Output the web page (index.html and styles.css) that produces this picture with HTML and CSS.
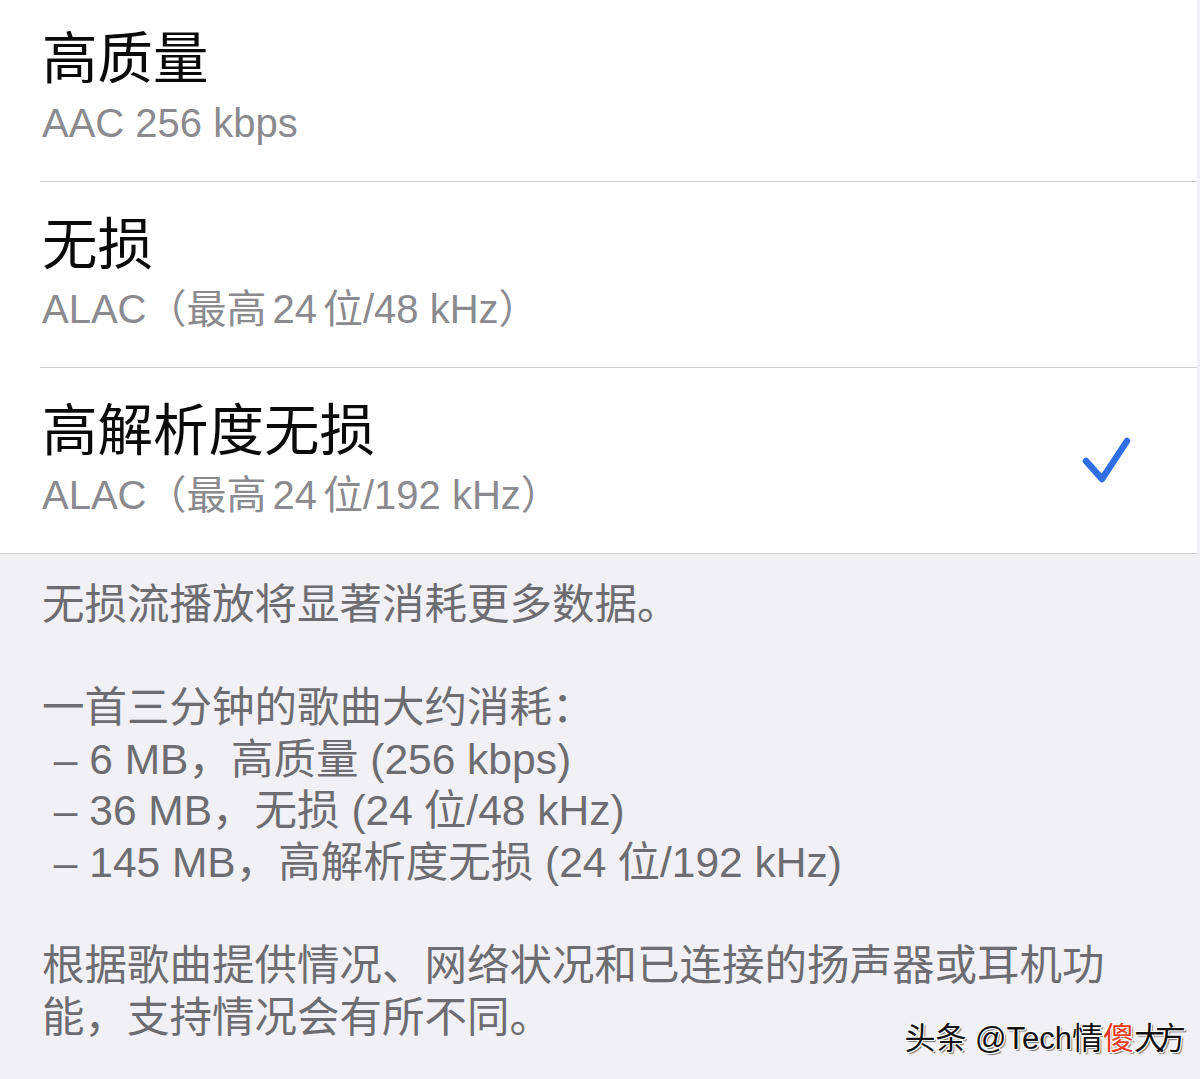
FILE: index.html
```html
<!DOCTYPE html>
<html lang="zh-CN">
<head>
<meta charset="utf-8">
<title>音质</title>
<link rel="stylesheet" href="styles.css">
</head>
<body>
<div class="screen">
  <ul class="options">
    <li class="option">
      <div class="option-text">
        <div class="option-title">高质量</div>
        <div class="option-sub">AAC 256 kbps</div>
      </div>
    </li>
    <li class="option">
      <div class="option-text">
        <div class="option-title">无损</div>
        <div class="option-sub">ALAC（最高<span class="gap"></span>24<span class="gap"></span>位/48 kHz）</div>
      </div>
    </li>
    <li class="option option-last">
      <div class="option-text">
        <div class="option-title">高解析度无损</div>
        <div class="option-sub">ALAC（最高<span class="gap"></span>24<span class="gap"></span>位/192 kHz）</div>
      </div>
      <svg class="check" viewBox="0 0 50 50" width="50" height="50" aria-hidden="true">
        <path d="M5 26 L21 44 L46 6" fill="none" stroke="#2f6fe3" stroke-width="6.5" stroke-linecap="round" stroke-linejoin="round"/>
      </svg>
    </li>
  </ul>
  <div class="footer">
    <p class="footer-p">无损流播放将显著消耗更多数据。</p>
    <p class="footer-p">一首三分钟的歌曲大约消耗：<br><span class="item"> – 6 MB，高质量 (256 kbps)</span><br><span class="item"> – 36 MB，无损 (24<span class="gap-s"></span>位/48 kHz)</span><br><span class="item"> – 145 MB，高解析度无损 (24<span class="gap-s"></span>位/192 kHz)</span></p>
    <p class="footer-p">根据歌曲提供情况、网络状况和已连接的扬声器或耳机功能，支持情况会有所不同。</p>
    <div class="watermark">头条 @Tech情<span class="wm-red">傻</span><span class="wm-tight">大方</span></div>
  </div>
</div>
</body>
</html>
```

FILE: styles.css
```css
* {
  box-sizing: border-box;
}

html, body {
  margin: 0;
  padding: 0;
  background: #f0f0f5;
}

body {
  font-family: "Liberation Sans", "Noto Sans CJK SC", sans-serif;
  width: 1200px;
  height: 1079px;
  overflow: hidden;
}

.screen {
  position: relative;
  width: 1200px;
  height: 1079px;
  overflow: hidden;
  background: #f0f0f5;
}

.options {
  list-style: none;
  margin: -4px 0 0 0;
  padding: 0 0 0 40px;
  background: #ffffff;
  border-bottom: 1px solid #c9c9ce;
  width: 1197px;
}

.option {
  display: flex;
  align-items: center;
  justify-content: space-between;
  padding: 26px 66px 32px 2px;
  border-bottom: 1px solid #d0d0d4;
}

.option-last {
  border-bottom: none;
}

.option-text {
  display: flex;
  flex-direction: column;
  gap: 11px;
}

.option-title {
  font-family: "Noto Sans CJK SC", sans-serif;
  font-size: 55.5px;
  line-height: 64px;
  color: #0a0a0a;
}

.option-sub {
  font-size: 40px;
  line-height: 52px;
  color: #8a8a8f;
}

.gap {
  display: inline-block;
  width: 6px;
}

.gap-s {
  display: inline-block;
  width: 11px;
}

.check {
  display: block;
  flex: none;
  margin-top: 4px;
}

.footer {
  padding: 25px 60px 0 42px;
  color: #6c6c71;
  font-size: 42.5px;
  line-height: 51.6px;
}

.footer-p {
  margin: 0 0 51.6px 0;
}

.item {
  white-space: pre;
}

.watermark {
  position: absolute;
  right: 24px;
  bottom: 22px;
  font-family: "Liberation Sans", "Noto Sans CJK SC", sans-serif;
  font-size: 31px;
  line-height: 36px;
  color: #111;
  text-shadow: 1px 1px 0 #fff, -1px -1px 0 #fff, 1px -1px 0 #fff, -1px 1px 0 #fff, 2px 2px 1px #777;
}

.wm-red {
  color: #e8391f;
}

.wm-tight {
  letter-spacing: -10px;
}
```
